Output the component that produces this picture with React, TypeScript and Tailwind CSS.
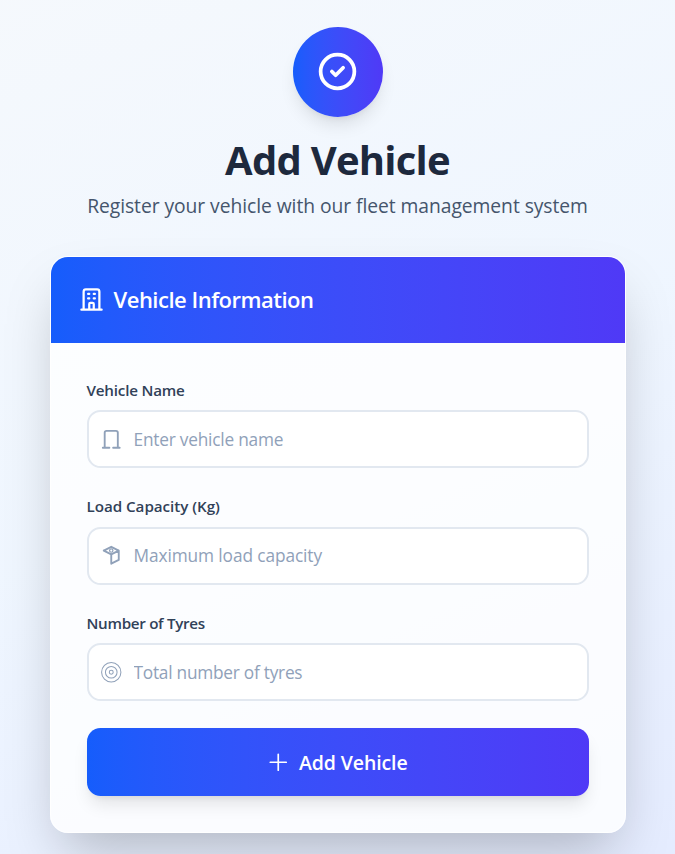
import type { ReactNode } from "react";

type IconProps = { className: string; children: ReactNode; strokeWidth?: number };

function Icon({ className, children, strokeWidth = 2 }: IconProps) {
  return (
    <svg
      className={`shrink-0 ${className}`}
      viewBox="0 0 24 24"
      fill="none"
      stroke="currentColor"
      strokeWidth={strokeWidth}
      strokeLinecap="round"
      strokeLinejoin="round"
    >
      {children}
    </svg>
  );
}

type FieldProps = { label: string; labelClass: string; placeholder: string; inputClass: string; icon: ReactNode };

function Field({ label, labelClass, placeholder, inputClass, icon }: FieldProps) {
  return (
    <label className="block">
      <span className={`mb-[9px] block text-[15.2px] leading-[22.5px] font-semibold whitespace-nowrap text-slate-700 ${labelClass}`}>
        {label}
      </span>
      <span className="flex h-[58px] items-center gap-[11px] rounded-[13.5px] border-2 border-slate-200 bg-white/90 pl-[11.5px] text-slate-400">
        {icon}
        <input
          type="text"
          placeholder={placeholder}
          className={`h-[27px] min-w-0 flex-1 bg-transparent text-[17.3px] leading-[27px] text-slate-700 outline-none placeholder:text-slate-400 ${inputClass}`}
        />
      </span>
    </label>
  );
}

export default function App() {
  return (
    <div className="flex h-[854px] justify-center overflow-hidden font-['Open_Sans','Noto_Sans',sans-serif]">
      <main className="flex h-[860px] w-[1901px] shrink-0 flex-col items-center bg-linear-to-br from-slate-50 via-blue-50 to-indigo-100 pt-[27px]">
        <div className="flex size-[90px] items-center justify-center rounded-full bg-linear-to-r from-blue-600 to-indigo-600 pb-px text-white shadow-[0_11px_17px_-3px_rgba(0,0,0,0.1),0_5px_7px_-5px_rgba(0,0,0,0.1)]">
          <Icon className="size-[45px]">
            <path d="M9 12l2 2 4-4m6 2a9 9 0 11-18 0 9 9 0 0118 0z" />
          </Icon>
        </div>
        <h1 className="mt-[18px] text-[40px] leading-[49px] font-bold tracking-[-0.75px] whitespace-nowrap text-slate-800">
          Add Vehicle
        </h1>
        <p className="mt-[6px] text-[19.3px] leading-[31.5px] tracking-[-0.06px] whitespace-nowrap text-slate-600">
          Register your vehicle with our fleet management system
        </p>

        <section className="mt-[34px] w-[576px] overflow-hidden rounded-[18px] border border-white/80 bg-white/80 shadow-[0_28px_56px_-13.5px_rgba(0,0,0,0.25)]">
          <header className="flex h-[86px] items-center gap-[9px] bg-linear-to-r from-blue-600 to-indigo-600 px-[27px] text-white">
            <Icon className="size-[27px]">
              <path d="M19 21V5a2 2 0 00-2-2H7a2 2 0 00-2 2v16m14 0h2m-2 0h-5m-9 0H3m2 0h5M9 7h1m-1 4h1m4-4h1m-1 4h1m-5 10v-5a1 1 0 011-1h2a1 1 0 011 1v5m-4 0h4" />
            </Icon>
            <h2 className="text-[22px] leading-[31.5px] font-semibold tracking-[-0.5px] whitespace-nowrap">Vehicle Information</h2>
          </header>
          <form className="flex flex-col gap-[27px] px-[36px] pt-[36px] pb-[36px]">
            <Field
              label="Vehicle Name"
              labelClass="tracking-[-0.2px]"
              placeholder="Enter vehicle name"
              inputClass="tracking-[-0.22px]"
              icon={
                <Icon className="size-[22.5px]">
                  <path d="M19 21V5a2 2 0 00-2-2H7a2 2 0 00-2 2v16m14 0h2m-2 0h-5m-9 0H3m2 0h5" />
                </Icon>
              }
            />
            <Field
              label="Load Capacity (Kg)"
              labelClass="tracking-[-0.04px]"
              placeholder="Maximum load capacity"
              inputClass="tracking-[-0.1px]"
              icon={
                <Icon className="size-[22.5px]">
                  <path d="M20 7l-8-4-8 4m16 0l-8 4m8-4v10l-8 4m0-10L4 7m8 4v10" />
                  <circle cx="12" cy="7" r="1.8" strokeWidth="1.3" />
                </Icon>
              }
            />
            <Field
              label="Number of Tyres"
              labelClass="tracking-[-0.3px]"
              placeholder="Total number of tyres"
              inputClass="tracking-[-0.25px]"
              icon={
                <Icon className="size-[22.5px]" strokeWidth={1.1}>
                  <circle cx="12" cy="12" r="10.3" />
                  <circle cx="12" cy="12" r="6.2" />
                  <circle cx="12" cy="12" r="2.1" />
                </Icon>
              }
            />
            <button
              type="button"
              className="flex h-[68px] items-center justify-center gap-[9px] rounded-[13.5px] bg-linear-to-r from-blue-600 to-indigo-600 text-[19.5px] leading-[31.5px] font-semibold text-white shadow-[0_11px_17px_-3px_rgba(0,0,0,0.1),0_5px_7px_-5px_rgba(0,0,0,0.1)]"
            >
              <Icon className="size-[22.5px]" strokeWidth={1.8}>
                <path d="M12 3.500v17M3.500 12h17" />
              </Icon>
              <span className="pt-px tracking-[-0.1px] whitespace-nowrap">Add Vehicle</span>
            </button>
          </form>
        </section>
      </main>
    </div>
  );
}
